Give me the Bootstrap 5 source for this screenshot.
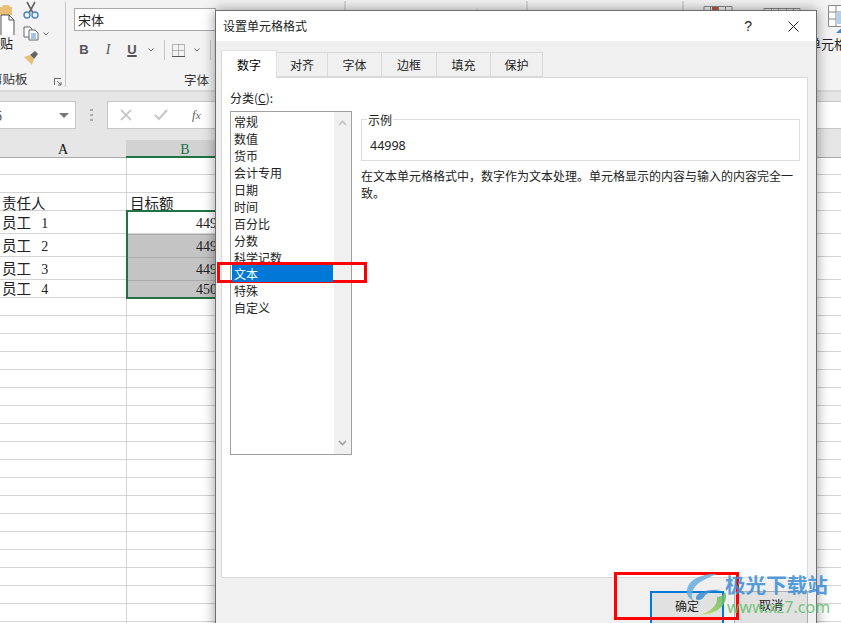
<!DOCTYPE html>
<html lang="zh">
<head>
  <meta charset="UTF-8" />
  <title>设置单元格格式</title>
  <link href="https://cdn.jsdelivr.net/npm/bootstrap@5.3.0/dist/css/bootstrap.min.css" rel="stylesheet" />
  <style>
    html, body { height: 100%; margin: 0; overflow: hidden; }
    body { width: 841px; height: 623px; position: relative; background: #fff; color: #222; font: 12px/17px "Noto Sans CJK SC", sans-serif; }

    /* ribbon */
    .ribbon { height: 92px; background: #f3f3f3; border-bottom: 2px solid #d8d8d8; overflow: hidden; }
    .rb-clip { width: 66px; height: 85px; margin-top: 2px; border-right: 1px solid #c6c6c6; flex: none; }
    .rb-paste { width: 23px; padding-top: 1px; }
    .rb-paste svg { display: block; }
    .rb-paste-label { font-size: 13px; line-height: 16px; }
    .rb-tools { width: 30px; margin-top: -1px; }
    .rb-tools svg { display: block; }
    .rb-tool-copy { margin-top: 7px; }
    .rb-tool-brush { margin-top: 8px; }
    .rb-group-label { font-size: 12.5px; line-height: 16px; color: #333; }
    .rb-clip .rb-group-label { margin-left: -10px; width: 40px; }
    .launcher { margin: 5px 3px 0 0; }
    .rb-font { width: 142px; flex: none; margin: 8px 0 0 8px; }
    .font-box { height: 23px; background: #fff; border: 1px solid #a9a9a9; padding-left: 3px; font-size: 13px; line-height: 21px; }
    .font-tools { height: 22px; margin: 8px 0 0 -2px; color: #555; font: bold 13px/22px "Liberation Sans", sans-serif; }
    .font-tools > span { display: flex; justify-content: center; align-items: center; flex: none; }
    .ft-24 { width: 24px; } .ft-14 { width: 14px; } .ft-12 { width: 12px; } .ft-16 { width: 16px; } .ft-22 { width: 22px; } .ft-4 { width: 4px; }
    .font-tools .t-i { font: italic 14px/22px "Liberation Serif", serif; }
    .t-u u { text-decoration-thickness: 2px; }
    .tool-sep { display: block; width: 1px; height: 20px; background: #c6c6c6; }
    .font-label { margin-top: 11px; padding-left: 110px; }
    .rb-behind { flex: none; display: block; }
    .rb-right { width: 25px; flex: none; overflow: hidden; }
    .rb-right svg { display: block; margin: 5px 0 0 12px; }
    .rb-right-label { font-size: 13px; line-height: 16px; margin: 3px 0 0 -8px; white-space: nowrap; }

    /* formula bar */
    .formula-bar { height: 48px; background: #e6e6e6; padding-top: 9px; overflow: hidden; }
    .name-box { width: 77px; height: 28px; flex: none; background: #fff; border: 1px solid #c6c6c6; border-left: 0; padding: 0 6px 0 0; margin-left: -1px; }
    .name-box span { margin-left: -4px; font-size: 13px; color: #555; }
    .caret-down { width: 0; height: 0; border: 5px solid transparent; border-top: 5px solid #777; border-bottom: 0; }
    .bar-dots { width: 31px; height: 28px; flex: none; }
    .fx-box { width: 760px; height: 28px; flex: none; background: #fff; border: 1px solid #c6c6c6; gap: 22px; padding-left: 12px; }
    .fx-text { font: italic 13px "Liberation Serif", serif; color: #666; margin-left: 2px; }

    /* sheet */
    .col-head { height: 18px; background: #e6e6e6; font: 14px/20px "Liberation Serif", serif; color: #111; border-bottom: 1px solid #aaa; }
    .col-a { width: 126px; text-align: center; }
    .col-b { width: 118px; height: 18px; background: #d2d2d2; color: #217346; border-bottom: 2px solid #217346; text-align: center; }
    .sheet-row { border-bottom: 1px solid #d4d4d4; font: 14.5px/1 "Noto Sans CJK SC", sans-serif; color: #222; }
    .sheet-row .cell-a { width: 127px; flex: none; align-self: stretch; border-right: 1px solid #d4d4d4; padding: 0 0 0 2px; white-space: pre; }
    .sheet-row .cell-b { flex: 1; padding-left: 3px; }
    .sheet-row.row-head .cell-a, .sheet-row.row-head .cell-b { padding-top: 3px; }
    .row-staff .cell-a { padding-top: 4px; }
    .row-staff.h18 .cell-a { padding-top: 1px; }
    .num { font-family: "Liberation Serif", serif; font-size: 14px; margin-left: 7px; }
    .h17 { height: 17px; } .h18 { height: 18px; } .h23 { height: 23px; }
    .sel-box { position: absolute; left: 126px; top: 210px; width: 114px; height: 89px; border: 2px solid #217346; }
    .sel-fill { height: 22px; padding-right: 7px; text-align: right; font: 14px/24px "Liberation Serif", serif; color: #222; overflow: hidden; white-space: nowrap; }
    .sel-fill + .sel-fill { border-top: 1px solid #aaa; height: 23px; }
    .sel-fill:last-child { height: 17px; line-height: 18px; }
    .sel-dark { background: #c4c4c4; }

    /* dialog, floats over the sheet */
    .fmt-dialog { position: absolute; left: 215px; top: 10px; width: 602px; height: 640px; background: #f0f0f0; border: 1px solid #6e6e6e; box-shadow: 0 0 12px rgba(0,0,0,.4); }
    .fmt-title { height: 30px; background: #fff; padding: 0 17px 0 7px; line-height: 30px; }
    .win-help { font: 14px "Liberation Sans", sans-serif; margin-right: 36px; }
    .fmt-tabs { padding: 9px 0 0 5px; border: 0; height: 36px; }
    .fmt-tabs .nav-link { color: #222; height: 25px; margin-top: 2px; padding: 3px 0 0; text-align: center; background: #f0f0f0; border: 1px solid #d9d9d9; border-left: 0; border-radius: 0; font-size: 12px; line-height: 18px; }
    .fmt-tabs .nav-link.active { background: #fff; height: 28px; margin-top: 0; padding-top: 5px; border-left: 1px solid #d9d9d9; border-bottom: 0; position: relative; z-index: 1; }
    .tab-panel { margin-left: 5px; width: 587px; height: 501px; background: #fff; border: 1px solid #d9d9d9; padding: 11px 8px 0 8px; gap: 9px; }
    .cat-col { width: 122px; flex: none; }
    .cat-list { height: 344px; margin-top: 5px; border: 1px solid #a0a0a0; }
    .cat-items { flex: 1; padding: 1px; }
    .cat-item { height: 17px; padding: 0 0 0 2px; line-height: 17px; border: 0; background: none; border-radius: 0; color: #222; }
    .cat-item.active { background: #0078d7; color: #fff; }
    .cat-scroll { width: 17px; background: #f0f0f0; }
    .sample-box { position: relative; margin-top: 30px; width: 439px; height: 42px; border: 1px solid #dcdcdc; padding: 17px 0 0 8px; font: 12.5px/17px "Noto Sans", sans-serif; }
    .sample-legend { position: absolute; left: 5px; top: -9px; padding: 0 1px; background: #fff; font: 12px/17px "Noto Sans CJK SC", sans-serif; }
    .sample-note { width: 439px; margin: 6px 0 0; }
    .fmt-buttons { gap: 10px; padding: 13px 8px 0 0; }
    .fmt-btn { width: 74px; height: 34px; padding: 0 0 6px; border-radius: 0; background: #e1e1e1; border: 1px solid #adadad; color: #222; font-size: 12px; line-height: 26px; display: block; }
    .fmt-btn.default { border: 2px solid #0078d7; }
    .mark-box { position: absolute; border: 3px solid #f00; }
    .mark-list { left: 217px; top: 262px; width: 150px; height: 21px; }
    .mark-ok { left: 614px; top: 572px; width: 125px; height: 48px; }

    /* watermark */
    .wm { position: absolute; left: 684px; top: 572px; opacity: .85; }
    .wm-text { position: absolute; left: 725px; top: 570px; white-space: nowrap; }
    .wm-cn { font: bold 20.6px/28px "Noto Sans CJK SC", sans-serif; color: #3b8ed6; opacity: .85; }
    .wm-en { font: 16px/20px "Noto Sans", sans-serif; color: #63bd6b; opacity: .85; margin-top: -1px; padding-left: 2px; }
  </style>
</head>
<body>
  <!-- ribbon -->
  <div class="ribbon d-flex">
    <div class="rb-clip d-flex flex-column">
      <div class="d-flex flex-grow-1">
        <div class="rb-paste">
          <svg width="16" height="32" viewBox="0 2 16 32"><path d="M-2 6h4l1-2h6l1 2h2v8H-2z" fill="#e9c078"/><path d="M1 14h8l5 5v16H1z" fill="#fff" stroke="#555"/><path d="M9 14v5h5" fill="none" stroke="#555"/></svg>
          <div class="rb-paste-label">贴</div>
        </div>
        <div class="rb-tools d-flex flex-column">
          <svg width="16" height="18" viewBox="0 0 16 18"><path d="M4 1l6 11M12 1L6 12" stroke="#666" stroke-width="1.6"/><circle cx="4" cy="14" r="3" fill="none" stroke="#4a86c5" stroke-width="1.4"/><circle cx="12" cy="14" r="3" fill="none" stroke="#4a86c5" stroke-width="1.4"/></svg>
          <div class="rb-tool-copy d-flex align-items-center gap-1">
            <svg width="16" height="15" viewBox="0 0 16 15"><path d="M1 1h6l2 2v8H1z" fill="#fff" stroke="#666"/><path d="M6 4h6l3 3v7H6z" fill="#fff" stroke="#666"/><path d="M8 8h5M8 10h5M8 12h5" stroke="#4a86c5"/></svg>
            <svg width="6" height="4" viewBox="0 0 6 4"><path d="M.5.5L3 3 5.500.5" fill="none" stroke="#666"/></svg>
          </div>
          <svg class="rb-tool-brush" width="17" height="16" viewBox="0 0 17 16"><path d="M7 6l5-4 3 3-4 5z" fill="#666"/><path d="M1 8l6-2 4 4-2 6z" fill="#e8bf7a"/></svg>
        </div>
      </div>
      <div class="d-flex justify-content-between align-items-center">
        <div class="rb-group-label">剪贴板</div>
        <svg class="launcher" width="8" height="8" viewBox="0 0 8 8"><path d="M.5 7V.5H7M3 3l4 4M4 7h3V4" fill="none" stroke="#666"/></svg>
      </div>
    </div>
    <div class="rb-font">
      <div class="font-box">宋体</div>
      <div class="font-tools d-flex align-items-center">
        <span class="ft-24">B</span><span class="ft-24 t-i">I</span><span class="ft-24 t-u"><u>U</u></span>
        <span class="ft-14"><svg width="6" height="4" viewBox="0 0 6 4"><path d="M.5.5L3 3 5.500.5" fill="none" stroke="#666"/></svg></span>
        <span class="ft-12"><i class="tool-sep"></i></span>
        <span class="ft-16"><svg width="13" height="13" viewBox="0 0 13 13"><path d="M.5.5h12v12H.5zM6.500 .5v12M.5 6.500h12" fill="none" stroke="#777" stroke-dasharray="1 1"/><path d="M0 12.500h13" stroke="#555"/></svg></span>
        <span class="ft-22"><svg width="6" height="4" viewBox="0 0 6 4"><path d="M.5.5L3 3 5.500.5" fill="none" stroke="#666"/></svg></span>
        <span class="ft-4"><i class="tool-sep"></i></span>
      </div>
      <div class="rb-group-label font-label">字体</div>
    </div>
    <!-- what peeks out above the dialog -->
    <svg class="rb-behind" width="600" height="12" viewBox="215 0 600 12">
      <g fill="none" stroke="#888">
        <path d="M215 12v-1.500h31V12M248 12v-1.500h40V12M535 12v-1.500h139V12M763 12V8.500h36V12M703 12V6.500h28V12"/>
        <path d="M344 1v11M526 1v11M682 1v11" stroke="#bbb"/>
        <path d="M476 8v4" stroke="#ccc"/>
        <path d="M709.500 6v6M717.500 6v6M724.500 6v6M770.500 8v4M777.500 8v4M785.500 8v4M792.500 8v4"/>
      </g>
      <path d="M376 10h22v2h-22z" fill="#888"/>
      <path d="M711 7h6v5h-6z" fill="#c0563b"/>
    </svg>
    <div class="rb-right">
      <svg width="26" height="28" viewBox="0 5 26 28"><path d="M.5 5.500h16v21H.5zM8 5.500v21M.5 12h16M.5 19h16" fill="#fff" stroke="#888"/><path d="M8 12h18v12H8z" fill="#b9cfe6"/><path d="M8 33l9-8h9v8z" fill="#4a86c5"/></svg>
      <div class="rb-right-label">单元格</div>
    </div>
  </div>

  <!-- formula bar -->
  <div class="formula-bar d-flex">
    <div class="name-box d-flex align-items-center justify-content-between"><span>5</span><i class="caret-down"></i></div>
    <div class="bar-dots d-flex justify-content-center align-items-center">
      <svg width="3" height="12" viewBox="0 0 3 12"><path d="M0 0h3v2H0zM0 5h3v2H0zM0 10h3v2H0z" fill="#aaa"/></svg>
    </div>
    <div class="fx-box d-flex align-items-center">
      <svg width="12" height="12" viewBox="0 0 12 12"><path d="M1 1l10 10M11 1L1 11" stroke="#c8c8c8" stroke-width="1.8"/></svg>
      <svg width="14" height="12" viewBox="0 0 14 12"><path d="M1 6l4 4 8-9" fill="none" stroke="#c8c8c8" stroke-width="2.2"/></svg>
      <span class="fx-text">f<small>x</small></span>
    </div>
  </div>

  <!-- sheet -->
  <div class="col-head d-flex"><div class="col-a">A</div><div class="col-b">B</div></div>
  <div class="sheet-row d-flex h17"><div class="cell-a"></div></div>
  <div class="sheet-row d-flex h18"><div class="cell-a"></div></div>
  <div class="sheet-row row-head d-flex h18"><div class="cell-a">责任人</div><div class="cell-b">目标额</div></div>
  <div class="sheet-row row-staff d-flex h23"><div class="cell-a">员工 <span class="num">1</span></div></div>
  <div class="sheet-row row-staff d-flex h23"><div class="cell-a">员工 <span class="num">2</span></div></div>
  <div class="sheet-row row-staff d-flex h23"><div class="cell-a">员工 <span class="num">3</span></div></div>
  <div class="sheet-row row-staff d-flex h18"><div class="cell-a">员工 <span class="num">4</span></div></div>
  <div class="sheet-row d-flex h18"><div class="cell-a"></div></div>
  <div class="sheet-row d-flex h18"><div class="cell-a"></div></div>
  <div class="sheet-row d-flex h18"><div class="cell-a"></div></div>
  <div class="sheet-row d-flex h18"><div class="cell-a"></div></div>
  <div class="sheet-row d-flex h18"><div class="cell-a"></div></div>
  <div class="sheet-row d-flex h18"><div class="cell-a"></div></div>
  <div class="sheet-row d-flex h18"><div class="cell-a"></div></div>
  <div class="sheet-row d-flex h18"><div class="cell-a"></div></div>
  <div class="sheet-row d-flex h18"><div class="cell-a"></div></div>
  <div class="sheet-row d-flex h18"><div class="cell-a"></div></div>
  <div class="sheet-row d-flex h18"><div class="cell-a"></div></div>
  <div class="sheet-row d-flex h18"><div class="cell-a"></div></div>
  <div class="sheet-row d-flex h18"><div class="cell-a"></div></div>
  <div class="sheet-row d-flex h18"><div class="cell-a"></div></div>
  <div class="sheet-row d-flex h18"><div class="cell-a"></div></div>
  <div class="sheet-row d-flex h18"><div class="cell-a"></div></div>
  <div class="sheet-row d-flex h18"><div class="cell-a"></div></div>
  <div class="sheet-row d-flex h18"><div class="cell-a"></div></div>
  <div class="sheet-row d-flex h18"><div class="cell-a"></div></div>
  <div class="sel-box">
    <div class="sel-fill">44998</div>
    <div class="sel-fill sel-dark">44999</div>
    <div class="sel-fill sel-dark">44999</div>
    <div class="sel-fill sel-dark">45000</div>
  </div>

  <!-- dialog -->
  <div class="fmt-dialog">
    <div class="fmt-title d-flex align-items-center">
      <span class="me-auto">设置单元格格式</span>
      <span class="win-help">?</span>
      <svg width="11" height="11" viewBox="0 0 11 11"><path d="M.5.5l10 10M10.500 .5l-10 10" stroke="#222"/></svg>
    </div>
    <ul class="nav nav-tabs fmt-tabs">
      <li class="nav-item"><a class="nav-link active" style="width:56px">数字</a></li>
      <li class="nav-item"><a class="nav-link" style="width:51px">对齐</a></li>
      <li class="nav-item"><a class="nav-link" style="width:54px">字体</a></li>
      <li class="nav-item"><a class="nav-link" style="width:55px">边框</a></li>
      <li class="nav-item"><a class="nav-link" style="width:54px">填充</a></li>
      <li class="nav-item"><a class="nav-link" style="width:52px">保护</a></li>
    </ul>
    <div class="tab-panel d-flex">
      <div class="cat-col">
        <div>分类(<u>C</u>):</div>
        <div class="cat-list d-flex">
          <div class="cat-items list-group">
            <div class="cat-item list-group-item">常规</div>
            <div class="cat-item list-group-item">数值</div>
            <div class="cat-item list-group-item">货币</div>
            <div class="cat-item list-group-item">会计专用</div>
            <div class="cat-item list-group-item">日期</div>
            <div class="cat-item list-group-item">时间</div>
            <div class="cat-item list-group-item">百分比</div>
            <div class="cat-item list-group-item">分数</div>
            <div class="cat-item list-group-item">科学记数</div>
            <div class="cat-item list-group-item active">文本</div>
            <div class="cat-item list-group-item">特殊</div>
            <div class="cat-item list-group-item">自定义</div>
          </div>
          <div class="cat-scroll d-flex flex-column justify-content-between align-items-center py-2">
            <svg width="9" height="6" viewBox="0 0 9 6"><path d="M1 5l3.500-3.500L8 5" fill="none" stroke="#c0c0c0" stroke-width="1.6"/></svg>
            <svg width="9" height="6" viewBox="0 0 9 6"><path d="M1 1l3.500 3.500L8 1" fill="none" stroke="#a0a0a0" stroke-width="1.6"/></svg>
          </div>
        </div>
      </div>
      <div>
        <div class="sample-box"><span class="sample-legend">示例</span>44998</div>
        <p class="sample-note">在文本单元格格式中&#65292;数字作为文本处理。单元格显示的内容与输入的内容完全一致。</p>
      </div>
    </div>
    <div class="fmt-buttons d-flex justify-content-end">
      <button type="button" class="btn fmt-btn default">确定</button>
      <button type="button" class="btn fmt-btn">取消</button>
    </div>
  </div>

  <div class="mark-box mark-list"></div>
  <div class="mark-box mark-ok"></div>

  <!-- watermark -->
  <svg class="wm" width="52" height="50" viewBox="0 0 52 50">
    <defs>
      <linearGradient id="wmGreen" x1="1" y1="0" x2="0" y2="1">
        <stop offset="0" stop-color="#5fb86a"/>
        <stop offset=".6" stop-color="#8fca5f"/>
        <stop offset="1" stop-color="#d9d866"/>
      </linearGradient>
    </defs>
    <path d="M33 2C18 1 3 8 3 19c0 5 2 8 6 9-3-6 0-14 9-19 5-3 10-5 15-7z" fill="#6aaede"/>
    <path d="M12 27c-1-5 8-10 25-9-9 1-15 3-17 7-2 3-6 4-8 2z" fill="#3b8ed6"/>
    <path d="M41 20c5 10-7 23-26 23 11-3 19-9 18-18 4 0 6-2 8-5z" fill="url(#wmGreen)"/>
  </svg>
  <div class="wm-text">
    <div class="wm-cn">极光下载站</div>
    <div class="wm-en">www.xz7.com</div>
  </div>

  <script src="https://cdn.jsdelivr.net/npm/bootstrap@5.3.0/dist/js/bootstrap.bundle.min.js"></script>
</body>
</html>
